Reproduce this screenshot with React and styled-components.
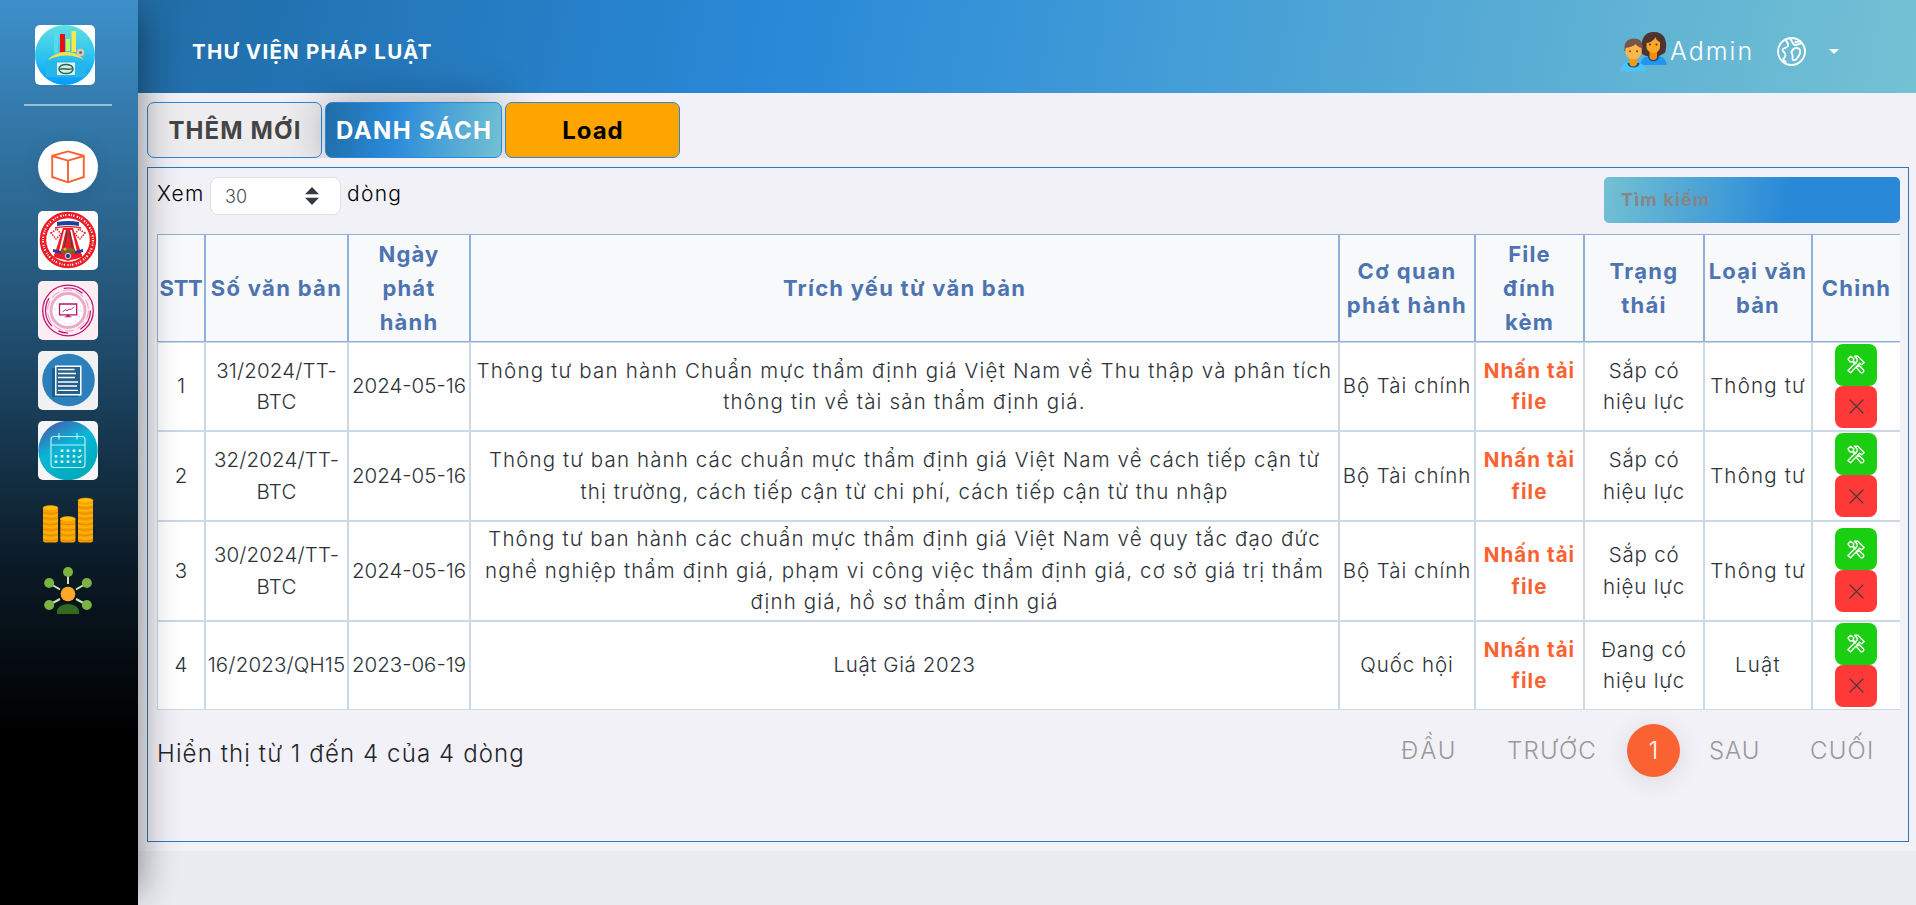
import React from 'react';
import styled, { createGlobalStyle } from 'styled-components';

const Global = createGlobalStyle`
  *, *::before, *::after { box-sizing: border-box; }
  html, body { margin: 0; padding: 0; }
  body {
    font-family: Inter, "Open Sans", sans-serif;
    font-weight: 300;
    color: #212529;
    background: #ebecf1;
    overflow: hidden;
  }
  button, input { font: inherit; }
`;

const Page = styled.div`
  display: flex;
  height: 905px;
`;

const Sidebar = styled.aside`
  position: relative;
  z-index: 5;
  flex: none;
  width: 138px;
  height: 905px;
  display: flex;
  flex-direction: column;
  align-items: center;
  background: linear-gradient(180deg, #3d8fca 0%, #2b668f 24%, #1c4461 42%, #0a1a25 63%, #000 81%);
  box-shadow: 14px 0 38px -12px rgba(0, 0, 0, 0.45);
`;

const Brand = styled.div`
  width: 60px;
  height: 60px;
  margin: 25px 8px 0 0;
  border-radius: 5px;
  overflow: hidden;
  background: #fff;
  svg { display: block; }
`;

const Rule = styled.div`
  width: 88px;
  height: 2px;
  margin: 19px 2px 35px 0;
  background: rgba(255, 255, 255, 0.5);
`;

const Nav = styled.nav`
  display: flex;
  flex-direction: column;
  align-items: center;
  padding-right: 2px;
`;

const NavPill = styled.a`
  display: flex;
  align-items: center;
  justify-content: center;
  width: 60px;
  height: 52px;
  margin-bottom: 18px;
  border-radius: 26px;
  background: #fff;
  box-shadow: 0 2px 20px rgba(0, 0, 0, 0.08);
`;

const NavTile = styled.a`
  display: block;
  width: 60px;
  height: 59px;
  margin-bottom: 11px;
  border-radius: 5px;
  overflow: hidden;
  background: ${(p) => p.$bg || 'transparent'};
  svg { display: block; }
`;

const Main = styled.main`
  flex: 1;
  min-width: 0;
`;

const Header = styled.header`
  height: 93px;
  display: flex;
  align-items: center;
  justify-content: space-between;
  padding: 9px 77px 0 54px;
  background: linear-gradient(100deg, #216ca6 0%, #2989d8 36%, #73c1d3 100%);
  color: #fff;
`;

const Title = styled.h1`
  margin: 0;
  font-size: 20.5px;
  font-weight: 700;
  letter-spacing: 1.25px;
  white-space: nowrap;
`;

const UserArea = styled.div`
  display: flex;
  align-items: center;
  svg { display: block; }
`;

const UserName = styled.span`
  margin: 0 25px 0 3px;
  width: 82px;
  font-size: 25px;
  line-height: 30px;
  letter-spacing: 2px;
  white-space: nowrap;
`;

const Caret = styled.span`
  margin-left: 23px;
  border: 5px solid transparent;
  border-top-color: #fff;
  border-bottom: 0;
`;

const Body = styled.section`
  background: #f2f1f7;
  height: 758px;
`;

const Tabs = styled.div`
  display: flex;
  gap: 3px;
  padding: 9px 0 0 9px;
`;

const Tab = styled.button`
  width: ${(p) => p.$w}px;
  height: 56px;
  padding: 0;
  border: 1px solid #2989d8;
  border-radius: 7px;
  font-size: 24px;
  font-weight: 700;
  letter-spacing: ${(p) => p.$ls}px;
  text-indent: ${(p) => p.$ls}px;
  white-space: nowrap;
  color: ${(p) => p.$fg};
  background: ${(p) => p.$bg};
  ${(p) => p.$active && 'box-shadow: 0 0 45px 0 rgba(0, 0, 0, 0.3);'}
  ${(p) => p.$raised && 'position: relative;'}
`;

const PanelWrap = styled.div`
  position: relative;
  background: #f2f1f7;
  padding: 9px 7px 9px 9px;
`;

const Panel = styled.div`
  height: 675px;
  border: 1px solid #3277b4;
  padding: 9px 8px 0 9px;
`;

const Toolbar = styled.div`
  display: flex;
  align-items: flex-start;
  height: 57px;
  color: #000;
`;

const ToolText = styled.span`
  width: ${(p) => p.$w}px;
  font-size: 21px;
  line-height: 34px;
  letter-spacing: 1.3px;
  white-space: nowrap;
`;

const Select = styled.div`
  width: 131px;
  height: 38px;
  margin-right: 6px;
  padding: 0 21px 0 14px;
  display: flex;
  align-items: center;
  justify-content: space-between;
  border: 1px solid #e2e2e6;
  border-radius: 8px;
  background: #fff;
  color: #495057;
  font-size: 18px;
`;

const Search = styled.input`
  width: 296px;
  height: 46px;
  margin-left: auto;
  padding: 0 17px 2px;
  border: 0;
  border-radius: 5px;
  font-size: 18px;
  font-weight: 700;
  letter-spacing: 1.2px;
  background: linear-gradient(100deg, #73c1d3 0%, #2989d8 62%, #2989d8 100%);
  &::placeholder { color: #868686; opacity: 1; }
`;

const Table = styled.table`
  width: 1743px;
  table-layout: fixed;
  border-collapse: separate;
  border-spacing: 0;
  background: #fff;
`;

const Row = styled.tr`
  height: ${(p) => p.$h}px;
`;

const Th = styled.th`
  height: 108px;
  padding: 0;
  border: 1px solid #8fb0d8;
  background: #f8f9fb;
  color: #4d74b0;
  font-size: 22px;
  font-weight: 700;
  line-height: 34px;
  letter-spacing: ${(p) => p.$ls || 0}px;
  white-space: nowrap;
  &:last-child { border-right: 0; }
`;

const Td = styled.td`
  height: inherit;
  padding: 0 0 1px;
  border: 1px solid #cbd8e5;
  text-align: center;
  vertical-align: middle;
  font-size: 20.5px;
  line-height: 31.5px;
  letter-spacing: ${(p) => p.$ls || 0}px;
  white-space: nowrap;
  color: ${(p) => (p.$link ? '#fb6232' : '#2c3238')};
  font-weight: ${(p) => (p.$link ? 700 : 300)};
  &:last-child { border-right: 0; padding: 0 1px 2px 0; }
`;

const Action = styled.button`
  display: flex;
  align-items: center;
  justify-content: center;
  width: 42px;
  height: 42px;
  margin: 0 auto;
  padding: 0;
  border: 0;
  border-radius: 8px;
  background: ${(p) => p.$bg};
`;

const Footer = styled.div`
  display: flex;
  justify-content: space-between;
`;

const Info = styled.div`
  padding-top: 27px;
  font-size: 24px;
  line-height: 34px;
  letter-spacing: 1.12px;
  white-space: nowrap;
`;

const Pager = styled.div`
  display: flex;
  align-items: center;
  height: 53px;
  margin: 14px 26px 0 0;
`;

const PageLink = styled.a`
  width: ${(p) => p.$w}px;
  margin-right: ${(p) => p.$mr || 0}px;
  font-size: 24px;
  color: #999;
  letter-spacing: ${(p) => p.$ls || 0}px;
  white-space: nowrap;
`;

const CurrentPage = styled.a`
  width: 53px;
  height: 53px;
  margin-right: 29px;
  border-radius: 50%;
  display: flex;
  align-items: center;
  justify-content: center;
  background: #fb6232;
  color: #fff;
  font-size: 24px;
  box-shadow: 0 4px 25px rgba(0, 0, 0, 0.1);
`;

const BrandArt = () => (
  <svg width="60" height="60" viewBox="0 0 60 60">
    <defs>
      <linearGradient id="brand" x1="0" y1="0" x2="0" y2="1">
        <stop offset="0" stopColor="#5fdfe3" />
        <stop offset="0.5" stopColor="#2fc4ee" />
        <stop offset="1" stopColor="#069cff" />
      </linearGradient>
    </defs>
    <circle cx="30" cy="30" r="30" fill="url(#brand)" />
    <path d="M19 7h4v21h-4z" fill="#56dce9" />
    <path d="M25 9h5v18h-5z" fill="#f40a0a" />
    <path d="M31 14h4v12h-4z" fill="#b8ff62" />
    <path d="M36.500 6h4.500v21h-4.500z" fill="#ffe545" />
    <path d="M11 36h40v16H11z" fill="#25b6ec" />
    <path d="M13 35c8-10 27-11 36 0-9-6-25-6-36 0z" fill="#ffe04a" />
    <circle cx="45.500" cy="27.500" r="2.700" fill="none" stroke="#efc29c" strokeWidth="2.200" />
    <circle cx="45.500" cy="27.500" r="1.300" fill="#5d6c8d" />
    <path d="M22 37.500h18V50H22z" fill="#e4efec" />
    <ellipse cx="31" cy="44" rx="7" ry="4.600" fill="#d8ebe3" stroke="#1d6b54" strokeWidth="1.500" />
    <path d="M25 44.500c3-2.500 9 1.500 12-1" fill="none" stroke="#1d6b54" strokeWidth="1.500" />
  </svg>
);

const CubeIcon = () => (
  <svg width="34" height="34" viewBox="0 0 34 34" fill="none" stroke="#fb6232" strokeWidth="1.900">
    <path d="M17 1.400 32.800 5.800V27L17 32.300 1.200 27V5.800z" />
    <path d="M1.200 6 17 10.600 32.800 6M17 10.600v21.500" />
  </svg>
);

const SealIcon = () => (
  <svg width="60" height="59" viewBox="0 0 60 59">
    <circle cx="30" cy="29" r="25" fill="#fff" stroke="#ee1c25" strokeWidth="6.500" />
    <circle cx="30" cy="29" r="25" fill="none" stroke="#fff" strokeWidth="2" strokeDasharray="1.400 1.300 .8 1.300 1.200 2.400" />
    <path d="M16 45 25 17h10l9 28-14 5z" fill="#ee1c25" />
    <path d="M22 40l5-21M38 40l-5-21" stroke="#fff" strokeWidth="1.800" />
    <path d="M29 20l-3 18M31.500 20l3 18" stroke="#444" strokeWidth="1.200" />
    <path d="M13 22l6-4 4 5-5 5zM47 22l-6-4-4 5 5 5z" fill="#fff" stroke="#ee1c25" strokeWidth="1.500" strokeDasharray="1.500 1" />
    <path d="M19 11q11-2 22 0v4q-11-2-22 0z" fill="#1f419f" />
    <path d="M17 17q13-3 26 0" fill="none" stroke="#ee1c25" strokeWidth="1.400" />
    <path d="M15 38l8 2v3l-8-2zM45 38l-8 2v3l8-2z" fill="#1f419f" />
    <ellipse cx="30" cy="40" rx="7.500" ry="3.200" fill="#8b5a2b" />
    <circle cx="27" cy="38" r="1.600" fill="#f2a81d" />
    <circle cx="33" cy="39" r="1.600" fill="#3f8f34" />
    <path d="M16 43q14 6 28 0v3q-14 6-28 0z" fill="#ee1c25" />
    <circle cx="30" cy="45" r="2.700" fill="#1f419f" stroke="#fff" strokeWidth="0.800" />
  </svg>
);

const MonitorIcon = () => (
  <svg width="60" height="59" viewBox="0 0 60 59" fill="none">
    <circle cx="30" cy="29.500" r="25.300" stroke="#bb1270" strokeWidth="1.300" />
    <circle cx="30" cy="29.500" r="22.500" stroke="#bb1270" strokeWidth="1.200" strokeDasharray="22 13 10 8 30 18 20 20.300" />
    <circle cx="30" cy="29.500" r="20.500" stroke="#dc8fb5" strokeWidth="0.800" strokeDasharray="9 4" />
    <circle cx="30" cy="29.500" r="17" fill="#fff" stroke="#eba9c5" strokeWidth="2.800" />
    <circle cx="30" cy="29.500" r="13" stroke="#d58bb0" strokeWidth="0.800" strokeDasharray="0.900 5" />
    <path d="M21.500 23h17.200v10.800H21.500z" stroke="#bb1270" strokeWidth="1.300" />
    <path d="M24.500 30.800l3-2 1.500.700 3-1.500 1 .700 3-3" stroke="#bb1270" strokeWidth="0.900" />
    <path d="M28.500 34h3.200v1.500h2v.800h-7.200v-.800h2z" fill="#bb1270" />
  </svg>
);

const DocIcon = () => (
  <svg width="60" height="59" viewBox="0 0 60 59">
    <circle cx="30.500" cy="29" r="26.300" fill="#2b80bc" />
    <path d="M14 17h26v29H14z" fill="#1d5e90" />
    <path d="M17.800 15.300h25v28.500h-25z" fill="#245f8c" stroke="#fff" strokeWidth="1.500" />
    <path d="M20 18.500h16.500M20 22.500h18M20 26.500h17M20 31h20M20 35h19M20 39.300h20" stroke="#fff" strokeWidth="1.300" />
  </svg>
);

const CalendarIcon = () => (
  <svg width="60" height="59" viewBox="0 0 60 59">
    <defs>
      <linearGradient id="cal" x1="0.150" y1="0" x2="0.700" y2="1">
        <stop offset="0" stopColor="#4858ae" />
        <stop offset="0.450" stopColor="#08b7d6" />
        <stop offset="1" stopColor="#00a9b8" />
      </linearGradient>
    </defs>
    <circle cx="30" cy="29.500" r="29.700" fill="url(#cal)" />
    <g fill="none" stroke="#b9f0f7" strokeWidth="1.200">
      <rect x="13" y="15.500" width="34" height="31" rx="3" />
      <path d="M13 24h34M21 12v6.500M39 12v6.500" />
    </g>
    <g stroke="#e8fbfd" strokeWidth="2.600">
      <path d="M22.700 29.700h20.500" strokeDasharray="2.600 3.400" />
      <path d="M16.700 35.200h20.500" strokeDasharray="2.600 3.400" />
      <path d="M16.700 40.700h26.500" strokeDasharray="2.600 3.400" />
    </g>
    <path d="M39.500 35.500l1.500 1 3-2.500" fill="none" stroke="#fff" strokeWidth="1.100" />
  </svg>
);

const stacks = [
  { x: 5, top: 17 },
  { x: 22.4, top: 28 },
  { x: 40, top: 9.5 },
];

const CoinsIcon = () => (
  <svg width="60" height="59" viewBox="0 0 60 59">
    {stacks.map((s) => (
      <g key={s.x}>
        <path
          d={`M${s.x} ${s.top}V49.500q0 2 2.500 2h10q2.500 0 2.500-2V${s.top}z`}
          fill="#ffa000"
        />
        {Array.from({ length: Math.floor((49 - s.top) / 2.75) }, (_, i) => (
          <path
            key={i}
            d={`M${s.x} ${49 - i * 2.75}q7.500 2.600 15 0`}
            fill="none"
            stroke={i % 2 ? '#ffc107' : '#d68a00'}
            strokeWidth="0.9"
          />
        ))}
        <ellipse cx={s.x + 7.5} cy={s.top} rx="7.500" ry="2.400" fill="#ffc107" stroke="#f59a00" strokeWidth="0.600" />
      </g>
    ))}
  </svg>
);

const NetworkIcon = () => (
  <svg width="60" height="59" viewBox="0 0 60 59">
    <path d="M30 11v12M11 22l11 6.500M49 22l-11 6.500M11 44l11-6M49 44l-11-6" stroke="#c8e6a9" strokeWidth="2" />
    <g fill="#7cb342">
      <circle cx="30" cy="11" r="5" />
      <circle cx="11.200" cy="22" r="5" />
      <circle cx="48.800" cy="22" r="5" />
      <circle cx="11.200" cy="44" r="5" />
      <circle cx="48.800" cy="44" r="5" />
    </g>
    <circle cx="30" cy="33" r="7.300" fill="#ffa726" />
    <path d="M19 53v-3c0-4 6-7 11-7s11 3 11 7v3z" fill="#33691e" />
  </svg>
);

const UsersIcon = () => (
  <svg width="47" height="41" viewBox="0 0 47 41">
    <path d="M21 34v-1c0-6 5-8 9-8h7c5 0 9 3 10 9z" fill="#2196f3" />
    <path d="M22 23C20 8 24 1 34 1s13 8 12 16c-.5 4-1 5-3 6l-4 2H26z" fill="#4e342e" />
    <path d="M28 25c0 7 11 7 11 0z" fill="#0d47a1" />
    <path d="M29.500 20H37v6c0 4-7.500 4-7.500 0z" fill="#fb8c00" />
    <path d="M26.500 12c6 0 9-6 9-6s1 4 4.500 5v5c0 3-3 6-6.500 6s-7-3-7-6z" fill="#ffa726" />
    <circle cx="30" cy="13.500" r="1" fill="#4e342e" />
    <circle cx="36.500" cy="13.500" r="1" fill="#4e342e" />
    <path d="M0 40.500c1-6.500 5-8.500 9-8.500h8c5 0 9 3 9.500 8.500z" fill="#4fc3f7" />
    <path d="M7.500 32c0 6 12 6 12 0z" fill="#01579b" />
    <path d="M9.500 26H17v6.500c0 4-7.500 4-7.500 0z" fill="#ff9800" />
    <path d="M4.500 20C3.500 11 8 7.500 14 7.500S24 11 22 20z" fill="#795548" />
    <path d="M5.500 17c8-1 10-4 10-4s2 3 6 4v4c0 4-4 7.500-8 7.500s-8-3.500-8-7.500z" fill="#ffb74d" />
    <circle cx="10" cy="20.200" r="1" fill="#784719" />
    <circle cx="17" cy="20.200" r="1" fill="#784719" />
  </svg>
);

const GlobeIcon = () => (
  <svg width="29" height="29" viewBox="0 0 29 29" fill="none" stroke="#fff" strokeWidth="1.900" strokeLinejoin="round">
    <circle cx="14.500" cy="14.500" r="13.500" />
    <path d="M8.500 3c2 2 3.500 4 2 6.500-1.500 2-5 1.500-5 3.500s3.500 2.500 3 5.500c-.5 2.500-3 3-2 4.500.7 1 2 1.500 3 1.800" />
    <path d="M12.500 1.500c2 1 2.500 4 4.500 6 2 1.500 5-.5 8-1.500M18 4.500c2 2 3-.5 5.500-.5" />
    <path d="M16 12.500c2-2 6-2 7 .5 1 3-1 6-3.500 9-1.500 2-4 1.500-4-.5s.8-2.500-.5-4.500c-1-1.500-.5-3 1-4.500z" />
  </svg>
);

const ToolsIcon = () => (
  <svg width="18" height="19" viewBox="0 0 18 19" fill="none" stroke="#fff" strokeWidth="1.400" strokeLinejoin="round">
    <path d="M.8 4 3.600 1.200 6.800 3.800 6.200 6l3 3M.8 4l2.400 3 2.200-.4 3 3M11.500 10l5 4.800c1 1.500-1.300 3.800-2.800 2.800L9.500 12.500z" />
    <path d="M7.500 1.200h3.300l6.400 6.300-2.400 2.300-2.200-1.600-9 9.600-2.600-2.200L10.300 6 10 3.800z" />
  </svg>
);

const CloseIcon = () => (
  <svg width="15" height="15" viewBox="0 0 15 15" stroke="#343a40" strokeWidth="1.200">
    <path d="M.700.700l13.600 13.600M14.300.700.700 14.300" />
  </svg>
);

const SortArrows = () => (
  <svg width="14" height="18" viewBox="0 0 14 18" fill="#343a40">
    <path d="M7 0l7 7.300H0zM7 18l-7-7.300h14z" />
  </svg>
);

const cols = [48, 143, 122, 869, 136, 109, 120, 108, 88];

const heads = [
  [['STT'], -0.3],
  [['Số văn bản'], 1.3],
  [['Ngày', 'phát', 'hành'], 1.2],
  [['Trích yếu từ văn bản'], 1.25],
  [['Cơ quan', 'phát hành'], 1.45],
  [['File', 'đính', 'kèm'], 1.2],
  [['Trạng', 'thái'], 1.3],
  [['Loại văn', 'bản'], 1.1],
  [['Chỉnh'], 1.25],
];

const rows = [
  {
    h: 89, no: ['31/2024/TT-', 'BTC'], date: '2024-05-16', ls: 1.2,
    text: [
      'Thông tư ban hành Chuẩn mực thẩm định giá Việt Nam về Thu thập và phân tích',
      'thông tin về tài sản thẩm định giá.',
    ],
    org: 'Bộ Tài chính', state: ['Sắp có', 'hiệu lực'], kind: 'Thông tư',
  },
  {
    h: 90, no: ['32/2024/TT-', 'BTC'], date: '2024-05-16', ls: 1.12,
    text: [
      'Thông tư ban hành các chuẩn mực thẩm định giá Việt Nam về cách tiếp cận từ',
      'thị trường, cách tiếp cận từ chi phí, cách tiếp cận từ thu nhập',
    ],
    org: 'Bộ Tài chính', state: ['Sắp có', 'hiệu lực'], kind: 'Thông tư',
  },
  {
    h: 100, no: ['30/2024/TT-', 'BTC'], date: '2024-05-16', ls: 1.13,
    text: [
      'Thông tư ban hành các chuẩn mực thẩm định giá Việt Nam về quy tắc đạo đức',
      'nghề nghiệp thẩm định giá, phạm vi công việc thẩm định giá, cơ sở giá trị thẩm',
      'định giá, hồ sơ thẩm định giá',
    ],
    org: 'Bộ Tài chính', state: ['Sắp có', 'hiệu lực'], kind: 'Thông tư',
  },
  {
    h: 89, no: ['16/2023/QH15'], date: '2023-06-19', ls: 0.6,
    text: ['Luật Giá 2023'],
    org: 'Quốc hội', state: ['Đang có', 'hiệu lực'], kind: 'Luật',
  },
];

const Lines = ({ items }) =>
  items.map((t, i) => (
    <React.Fragment key={i}>
      {i > 0 && <br />}
      {t}
    </React.Fragment>
  ));

export default function App() {
  return (
    <Page>
      <Global />
      <Sidebar>
        <Brand><BrandArt /></Brand>
        <Rule />
        <Nav>
          <NavPill><CubeIcon /></NavPill>
          <NavTile $bg="#fff"><SealIcon /></NavTile>
          <NavTile $bg="#feecf3"><MonitorIcon /></NavTile>
          <NavTile $bg="#f1f1f1"><DocIcon /></NavTile>
          <NavTile $bg="#f5f5f6"><CalendarIcon /></NavTile>
          <NavTile><CoinsIcon /></NavTile>
          <NavTile><NetworkIcon /></NavTile>
        </Nav>
      </Sidebar>
      <Main>
        <Header>
          <Title>THƯ VIỆN PHÁP LUẬT</Title>
          <UserArea>
            <UsersIcon />
            <UserName>Admin</UserName>
            <GlobeIcon />
            <Caret />
          </UserArea>
        </Header>
        <Body>
          <Tabs>
            <Tab $w={175} $fg="#444" $bg="#ededef" $ls={1.1}>THÊM MỚI</Tab>
            <Tab
              $w={177}
              $fg="#fff"
              $ls={1.35}
              $bg="linear-gradient(100deg, #216ca6 0%, #2989d8 38%, #73c1d3 100%)"
              $active
            >
              DANH SÁCH
            </Tab>
            <Tab $w={175} $fg="#000" $bg="#ffa500" $ls={0.9} $raised>Load</Tab>
          </Tabs>
          <PanelWrap>
            <Panel>
              <Toolbar>
                <ToolText $w={53}>Xem</ToolText>
                <Select>
                  30
                  <SortArrows />
                </Select>
                <ToolText $w={60}>dòng</ToolText>
                <Search placeholder="Tìm kiếm" />
              </Toolbar>
              <Table>
                <colgroup>
                  {cols.map((w, i) => <col key={i} width={w} />)}
                </colgroup>
                <thead>
                  <tr>
                    {heads.map(([t, ls]) => (
                      <Th key={t[0]} $ls={ls}><Lines items={t} /></Th>
                    ))}
                  </tr>
                </thead>
                <tbody>
                  {rows.map((r, i) => (
                    <Row key={i} $h={r.h}>
                      <Td>{i + 1}</Td>
                      <Td $ls={0.15}><Lines items={r.no} /></Td>
                      <Td>{r.date}</Td>
                      <Td $ls={r.ls}><Lines items={r.text} /></Td>
                      <Td $ls={0.95}>{r.org}</Td>
                      <Td $link $ls={1.05}><Lines items={['Nhấn tải', 'file']} /></Td>
                      <Td $ls={0.8}><Lines items={r.state} /></Td>
                      <Td $ls={1.2}>{r.kind}</Td>
                      <Td>
                        <Action $bg="#1acf12"><ToolsIcon /></Action>
                        <Action $bg="#ff3838"><CloseIcon /></Action>
                      </Td>
                    </Row>
                  ))}
                </tbody>
              </Table>
              <Footer>
                <Info>Hiển thị từ 1 đến 4 của 4 dòng</Info>
                <Pager>
                  <PageLink $w={56} $mr={50} $ls={1.9}>ĐẦU</PageLink>
                  <PageLink $w={90} $mr={30} $ls={1.2}>TRƯỚC</PageLink>
                  <CurrentPage>1</CurrentPage>
                  <PageLink $w={50} $mr={51} $ls={0.9}>SAU</PageLink>
                  <PageLink $w={64} $ls={1.2}>CUỐI</PageLink>
                </Pager>
              </Footer>
            </Panel>
          </PanelWrap>
        </Body>
      </Main>
    </Page>
  );
}
